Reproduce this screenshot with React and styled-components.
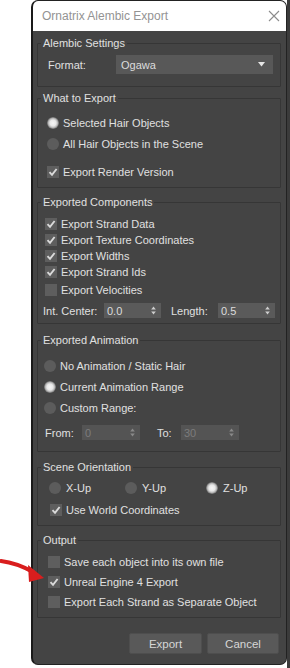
import React from 'react';
import styled, { createGlobalStyle } from 'styled-components';

const GlobalStyle = createGlobalStyle`
  html, body {
    margin: 0;
    padding: 0;
    background: #ffffff;
  }
  body {
    font-family: 'Liberation Sans', Arial, sans-serif;
    font-size: 11px;
    color: #dcdcdc;
  }
`;

const Screen = styled.div`
  position: relative;
  display: flex;
  height: 668px;
  overflow: hidden;
`;

const Gutter = styled.div`
  width: 31px;
  flex-shrink: 0;
`;

const Backdrop = styled.div`
  flex: 1;
  background: #3b3b3b;
`;

const Window = styled.div`
  width: 256px;
  flex-shrink: 0;
  align-self: flex-start;
  display: flex;
  flex-direction: column;
  background: #444444;
  border: 1px solid #222222;
  border-left: 2px solid #1a1a1a;
  border-radius: 7px;
  overflow: hidden;
  box-sizing: border-box;
`;

const TitleBar = styled.div`
  height: 30px;
  display: flex;
  align-items: center;
  justify-content: space-between;
  padding: 0 6px 0 9px;
  background: #ffffff;
`;

const TitleText = styled.span`
  font-size: 12px;
  color: #939393;
`;

const Body = styled.div`
  display: flex;
  flex-direction: column;
  padding: 5px 5px 10px 4px;
`;

const Group = styled.fieldset`
  margin: ${(p) => p.$mt || 0}px 0 0 0;
  padding: ${(p) => p.$pt}px 5px ${(p) => p.$pb}px 5px;
  min-width: 0;
  border: 1px solid #363636;
  border-radius: 1px;
`;

const Legend = styled.legend`
  padding: 0 2px;
  margin-left: -2px;
  line-height: 14px;
  height: 14px;
  color: #e0e0e0;
`;

const Row = styled.div`
  display: flex;
  align-items: center;
  height: ${(p) => p.$h || 20}px;
  margin-top: ${(p) => p.$mt || 0}px;
  padding-left: ${(p) => p.$indent || 0}px;
`;

const Option = styled.div`
  display: flex;
  align-items: center;
  width: ${(p) => (p.$w ? `${p.$w}px` : 'auto')};
  flex-shrink: 0;
`;

const RadioDot = styled.span`
  width: 12px;
  height: 12px;
  border-radius: 50%;
  flex-shrink: 0;
  margin-right: ${(p) => p.$gap || 4}px;
  background: ${(p) =>
    p.$checked
      ? 'radial-gradient(circle, #f6f6f6 0, #e8e8e8 3px, #bcbcbc 4.5px, #6a6a6a 6px)'
      : '#5c5c5c'};
`;

const Box = styled.span`
  width: 12px;
  height: 12px;
  flex-shrink: 0;
  margin-right: ${(p) => p.$gap || 4}px;
  background: #5e5e5e;
  display: flex;
  align-items: center;
  justify-content: center;
`;

const Text = styled.span`
  color: #e0e0e0;
  white-space: nowrap;
`;

const FieldLabel = styled.span`
  width: ${(p) => p.$w}px;
  margin-left: ${(p) => p.$ml || 0}px;
  flex-shrink: 0;
  color: #e0e0e0;
`;

const Select = styled.div`
  width: 157px;
  height: 19px;
  box-sizing: border-box;
  display: flex;
  align-items: center;
  justify-content: space-between;
  padding: 0 8px 0 5px;
  background: #585858;
  color: #dcdcdc;
`;

const Spinner = styled.div`
  width: ${(p) => p.$w}px;
  height: 15px;
  box-sizing: border-box;
  display: flex;
  align-items: center;
  justify-content: space-between;
  padding: 0 5px 0 3px;
  background: ${(p) => (p.$disabled ? '#545454' : '#5a5a5a')};
  color: ${(p) => (p.$disabled ? '#7c7c7c' : '#dcdcdc')};
  flex-shrink: 0;
`;

const ButtonRow = styled.div`
  display: flex;
  justify-content: flex-end;
  gap: 5px;
  margin: 15px 2px 0 0;
`;

const Button = styled.div`
  width: ${(p) => p.$w}px;
  height: 21px;
  box-sizing: border-box;
  display: flex;
  align-items: center;
  justify-content: center;
  background: #595959;
  border: 1px solid #4e4e4e;
  border-radius: 2px;
  color: #d6d6d6;
  font-size: 11.5px;
`;

const Arrow = styled.svg`
  position: absolute;
  left: 0;
  top: 555px;
  pointer-events: none;
`;

function Radio({ checked, children, gap, w }) {
  return (
    <Option $w={w}>
      <RadioDot $checked={checked} $gap={gap} />
      <Text>{children}</Text>
    </Option>
  );
}

function Check({ checked, children, gap }) {
  return (
    <Option>
      <Box $gap={gap}>
        {checked && (
          <svg width="10" height="10" viewBox="0 0 10 10">
            <path d="M1.5 5.2 L4 7.8 L8.6 2" fill="none" stroke="#dadada" strokeWidth="1.9" />
          </svg>
        )}
      </Box>
      <Text>{children}</Text>
    </Option>
  );
}

function SpinArrows({ color }) {
  return (
    <svg width="5" height="9" viewBox="0 0 5 9">
      <path d="M2.5 0.5 L4.8 3.5 L0.2 3.5 Z" fill={color} />
      <path d="M2.5 8.5 L4.8 5.5 L0.2 5.5 Z" fill={color} />
    </svg>
  );
}

export default function App() {
  return (
    <>
      <GlobalStyle />
      <Screen>
        <Gutter />
        <Window>
          <TitleBar>
            <TitleText>Ornatrix Alembic Export</TitleText>
            <svg width="12" height="12" viewBox="0 0 12 12">
              <path d="M1 1 L11 11 M11 1 L1 11" stroke="#8c8c8c" strokeWidth="1.1" />
            </svg>
          </TitleBar>
          <Body>
            <Group $pt={5} $pb={12}>
              <Legend>Alembic Settings</Legend>
              <Row $h={19} $indent={5}>
                <FieldLabel $w={68}>Format:</FieldLabel>
                <Select>
                  <span>Ogawa</span>
                  <svg width="7" height="5" viewBox="0 0 7 5">
                    <path d="M0 0 L7 0 L3.5 4.5 Z" fill="#e6e6e6" />
                  </svg>
                </Select>
              </Row>
            </Group>

            <Group $mt={4} $pt={7} $pb={5}>
              <Legend>What to Export</Legend>
              <Row $h={21} $indent={4}>
                <Radio checked>Selected Hair Objects</Radio>
              </Row>
              <Row $h={21} $indent={4}>
                <Radio>All Hair Objects in the Scene</Radio>
              </Row>
              <Row $h={21} $mt={7} $indent={4}>
                <Check checked>Export Render Version</Check>
              </Row>
            </Group>

            <Group $mt={7} $pt={7} $pb={5}>
              <Legend>Exported Components</Legend>
              <Row $h={16} $indent={2}>
                <Check checked>Export Strand Data</Check>
              </Row>
              <Row $h={16} $indent={2}>
                <Check checked>Export Texture Coordinates</Check>
              </Row>
              <Row $h={16} $indent={2}>
                <Check checked>Export Widths</Check>
              </Row>
              <Row $h={16} $indent={2}>
                <Check checked>Export Strand Ids</Check>
              </Row>
              <Row $h={16} $mt={2} $indent={2}>
                <Check>Export Velocities</Check>
              </Row>
              <Row $h={15} $mt={5}>
                <FieldLabel $w={61}>Int. Center:</FieldLabel>
                <Spinner $w={57}>
                  <span>0.0</span>
                  <SpinArrows color="#cfcfcf" />
                </Spinner>
                <FieldLabel $w={47} $ml={10}>Length:</FieldLabel>
                <Spinner $w={57}>
                  <span>0.5</span>
                  <SpinArrows color="#cfcfcf" />
                </Spinner>
              </Row>
            </Group>

            <Group $mt={9} $pt={8} $pb={11}>
              <Legend>Exported Animation</Legend>
              <Row $h={21} $indent={1}>
                <Radio>No Animation / Static Hair</Radio>
              </Row>
              <Row $h={21} $indent={1}>
                <Radio checked>Current Animation Range</Radio>
              </Row>
              <Row $h={21} $indent={1}>
                <Radio>Custom Range:</Radio>
              </Row>
              <Row $h={15} $mt={7} $indent={2}>
                <FieldLabel $w={37}>From:</FieldLabel>
                <Spinner $w={58} $disabled>
                  <span>0</span>
                  <SpinArrows color="#8a8a8a" />
                </Spinner>
                <FieldLabel $w={24} $ml={17}>To:</FieldLabel>
                <Spinner $w={58} $disabled>
                  <span>30</span>
                  <SpinArrows color="#8a8a8a" />
                </Spinner>
              </Row>
            </Group>

            <Group $mt={8} $pt={3} $pb={5}>
              <Legend>Scene Orientation</Legend>
              <Row $h={21} $indent={6}>
                <Radio w={76} gap={5}>X-Up</Radio>
                <Radio w={81} gap={5}>Y-Up</Radio>
                <Radio checked gap={5}>Z-Up</Radio>
              </Row>
              <Row $h={20} $mt={2} $indent={7}>
                <Check checked gap={4}>Use World Coordinates</Check>
              </Row>
            </Group>

            <Group $mt={7} $pt={5} $pb={5}>
              <Legend>Output</Legend>
              <Row $h={20} $indent={5}>
                <Check>Save each object into its own file</Check>
              </Row>
              <Row $h={20} $indent={5}>
                <Check checked>Unreal Engine 4 Export</Check>
              </Row>
              <Row $h={20} $indent={5}>
                <Check>Export Each Strand as Separate Object</Check>
              </Row>
            </Group>

            <ButtonRow>
              <Button $w={73}>Export</Button>
              <Button $w={72}>Cancel</Button>
            </ButtonRow>
          </Body>
        </Window>
        <Backdrop />
        <Arrow width="50" height="32" viewBox="0 0 50 32">
          <path d="M1 6 Q17 8 33 17" fill="none" stroke="#d91e1e" strokeWidth="4" strokeLinecap="round" />
          <path d="M28 10 L44 23 L29 27 Z" fill="#d91e1e" />
        </Arrow>
      </Screen>
    </>
  );
}
